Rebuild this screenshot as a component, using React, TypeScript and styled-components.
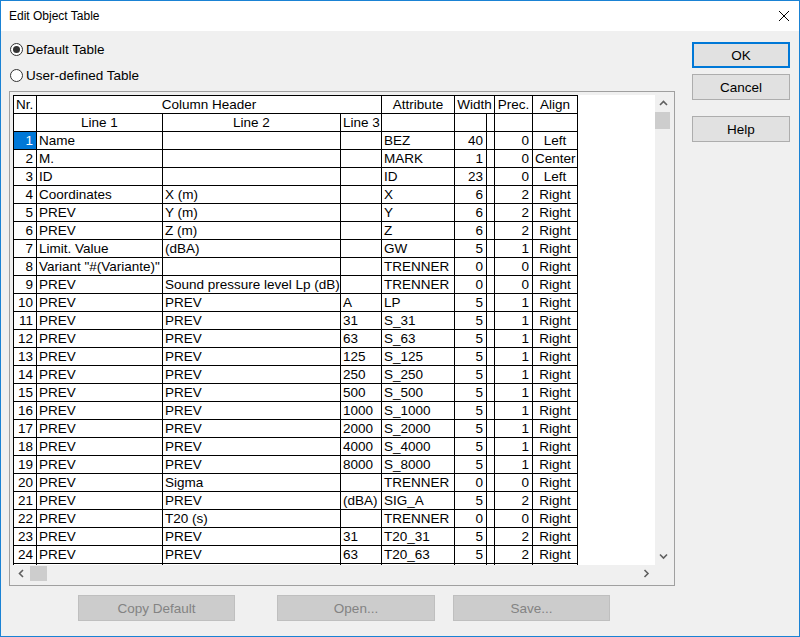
import React from "react";
import styled, { createGlobalStyle } from "styled-components";

type Align = "left" | "right" | "center";

const GlobalStyle = createGlobalStyle`
  html, body {
    margin: 0;
    padding: 0;
    background: #f0f0f0;
  }
  body {
    font-family: "Liberation Sans", Arial, sans-serif;
  }
`;

const COLUMNS = [23, 126, 178, 41, 73, 32, 8, 38, 45];

// nr, line 1, line 2, line 3, attribute, width, prec, align
const ROWS: [number, string, string, string, string, number, number, string][] = [
  [1, "Name", "", "", "BEZ", 40, 0, "Left"],
  [2, "M.", "", "", "MARK", 1, 0, "Center"],
  [3, "ID", "", "", "ID", 23, 0, "Left"],
  [4, "Coordinates", "X (m)", "", "X", 6, 2, "Right"],
  [5, "PREV", "Y (m)", "", "Y", 6, 2, "Right"],
  [6, "PREV", "Z (m)", "", "Z", 6, 2, "Right"],
  [7, "Limit. Value", "(dBA)", "", "GW", 5, 1, "Right"],
  [8, 'Variant "#(Variante)"', "", "", "TRENNER", 0, 0, "Right"],
  [9, "PREV", "Sound pressure level Lp (dB)", "", "TRENNER", 0, 0, "Right"],
  [10, "PREV", "PREV", "A", "LP", 5, 1, "Right"],
  [11, "PREV", "PREV", "31", "S_31", 5, 1, "Right"],
  [12, "PREV", "PREV", "63", "S_63", 5, 1, "Right"],
  [13, "PREV", "PREV", "125", "S_125", 5, 1, "Right"],
  [14, "PREV", "PREV", "250", "S_250", 5, 1, "Right"],
  [15, "PREV", "PREV", "500", "S_500", 5, 1, "Right"],
  [16, "PREV", "PREV", "1000", "S_1000", 5, 1, "Right"],
  [17, "PREV", "PREV", "2000", "S_2000", 5, 1, "Right"],
  [18, "PREV", "PREV", "4000", "S_4000", 5, 1, "Right"],
  [19, "PREV", "PREV", "8000", "S_8000", 5, 1, "Right"],
  [20, "PREV", "Sigma", "", "TRENNER", 0, 0, "Right"],
  [21, "PREV", "PREV", "(dBA)", "SIG_A", 5, 2, "Right"],
  [22, "PREV", "T20 (s)", "", "TRENNER", 0, 0, "Right"],
  [23, "PREV", "PREV", "31", "T20_31", 5, 2, "Right"],
  [24, "PREV", "PREV", "63", "T20_63", 5, 2, "Right"],
];

const Window = styled.div`
  width: 800px;
  height: 637px;
  box-sizing: border-box;
  border: 1px solid #1a82d4;
  background: #f0f0f0;
  display: flex;
  flex-direction: column;
  overflow: hidden;
`;

const TitleBar = styled.div`
  height: 30px;
  flex-shrink: 0;
  background: #fff;
  display: flex;
  align-items: center;
  justify-content: space-between;
  padding: 0 9px 0 8px;
  font-size: 12px;
  color: #000;
`;

const CloseButton = styled.div`
  width: 12px;
  height: 12px;
  display: flex;
  margin-top: -1px;
`;

const Body = styled.div`
  flex: 1;
  display: flex;
  flex-direction: column;
  padding: 5px 0 0 8px;
`;

const TopRow = styled.div`
  display: flex;
  gap: 17px;
`;

const LeftColumn = styled.div`
  width: 666px;
  display: flex;
  flex-direction: column;
`;

const RightColumn = styled.div`
  width: 98px;
  display: flex;
  flex-direction: column;
  padding-top: 6px;
`;

const RadioRow = styled.label`
  height: 26px;
  display: flex;
  align-items: center;
  gap: 3px;
  padding-left: 1px;
  font-size: 13.5px;
  color: #000;
`;

const RadioCircle = styled.span<{ $checked?: boolean }>`
  width: 13px;
  height: 13px;
  box-sizing: border-box;
  border: 1px solid #333;
  border-radius: 50%;
  background: #fff;
  display: flex;
  align-items: center;
  justify-content: center;
  &::after {
    content: "";
    width: 7px;
    height: 7px;
    border-radius: 50%;
    background: ${(p) => (p.$checked ? "#333" : "transparent")};
  }
`;

const Frame = styled.div`
  margin-top: 3px;
  height: 495px;
  box-sizing: border-box;
  border: 1px solid #a0a0a0;
  padding: 3px 2px 3px 3px;
  display: grid;
  grid-template-columns: 642px 17px;
  grid-template-rows: 470px 17px;
`;

const GridArea = styled.div`
  background: #fff;
  overflow: hidden;
`;

const Table = styled.div`
  display: grid;
  grid-template-columns: ${COLUMNS.map((c) => `${c}px`).join(" ")};
  width: max-content;
  border-left: 1px solid #000;
  border-top: 1px solid #000;
  font-size: 13.5px;
  color: #000;
`;

const Cell = styled.div<{ $align?: Align; $span?: number; $selected?: boolean }>`
  grid-column: span ${(p) => p.$span ?? 1};
  height: 18px;
  box-sizing: border-box;
  border-right: 1px solid #000;
  border-bottom: 1px solid #000;
  padding: ${(p) => (p.$align === "right" ? "0 3px 0 2px" : "0 2px")};
  line-height: 17px;
  text-align: ${(p) => p.$align ?? "left"};
  white-space: nowrap;
  overflow: hidden;
  background: ${(p) => (p.$selected ? "#0078d7" : "transparent")};
  color: ${(p) => (p.$selected ? "#fff" : "#000")};
`;

const VScroll = styled.div`
  display: flex;
  flex-direction: column;
  background: #f0f0f0;
`;

const HScroll = styled.div`
  display: flex;
  background: #f0f0f0;
`;

const ArrowBox = styled.div`
  width: 17px;
  height: 17px;
  flex-shrink: 0;
  display: flex;
  align-items: center;
  justify-content: center;
`;

const Track = styled.div<{ $vertical?: boolean }>`
  flex: 1;
  display: flex;
  flex-direction: ${(p) => (p.$vertical ? "column" : "row")};
`;

const Thumb = styled.div<{ $vertical?: boolean }>`
  background: #cdcdcd;
  width: ${(p) => (p.$vertical ? "15px" : "17px")};
  height: ${(p) => (p.$vertical ? "17px" : "15px")};
  margin: ${(p) => (p.$vertical ? "0 1px 0 0" : "1px 0 0 0")};
`;

const Spacer = styled.div`
  flex: 1;
`;

const Button = styled.div<{ $primary?: boolean; $disabled?: boolean; $offset?: number; $gap?: number }>`
  height: 26px;
  box-sizing: border-box;
  display: flex;
  align-items: center;
  justify-content: center;
  font-size: 13.5px;
  background: ${(p) => (p.$disabled ? "#cccccc" : "#e1e1e1")};
  border: ${(p) =>
    p.$primary ? "2px solid #0078d7" : p.$disabled ? "1px solid #bfbfbf" : "1px solid #adadad"};
  color: ${(p) => (p.$disabled ? "#838383" : "#000")};
  margin-top: ${(p) => p.$gap ?? 0}px;
  margin-left: ${(p) => p.$offset ?? 0}px;
`;

const BottomRow = styled.div`
  display: flex;
  margin-top: 9px;
`;

const WideButton = styled(Button)<{ $width: number }>`
  width: ${(p) => p.$width}px;
`;

const Chevron: React.FC<{ dir: "up" | "down" | "left" | "right" }> = ({ dir }) => {
  const points = {
    up: "1,5 4.5,1.5 8,5",
    down: "1,1.5 4.5,5 8,1.5",
    left: "5,1 1.5,4.5 5,8",
    right: "1.5,1 5,4.5 1.5,8",
  }[dir];
  const vertical = dir === "up" || dir === "down";
  return (
    <svg width={vertical ? 9 : 7} height={vertical ? 7 : 9} viewBox={vertical ? "0 0 9 7" : "0 0 7 9"}>
      <polyline points={points} fill="none" stroke="#606060" strokeWidth="1.6" />
    </svg>
  );
};

const alignOf = (col: number): Align => {
  if (col === 0 || col === 5 || col === 7) return "right";
  if (col === 8) return "center";
  return "left";
};

const App: React.FC = () => {
  return (
    <>
      <GlobalStyle />
      <Window>
        <TitleBar>
          <span>Edit Object Table</span>
          <CloseButton>
            <svg width="12" height="12" viewBox="0 0 12 12">
              <path d="M1 1 L11 11 M11 1 L1 11" stroke="#000" strokeWidth="1" />
            </svg>
          </CloseButton>
        </TitleBar>
        <Body>
          <TopRow>
            <LeftColumn>
              <RadioRow>
                <RadioCircle $checked />
                Default Table
              </RadioRow>
              <RadioRow>
                <RadioCircle />
                User-defined Table
              </RadioRow>
              <Frame>
                <GridArea>
                  <Table>
                    <Cell>Nr.</Cell>
                    <Cell $span={3} $align="center">Column Header</Cell>
                    <Cell $align="center">Attribute</Cell>
                    <Cell $span={2} $align="center">Width</Cell>
                    <Cell $align="center">Prec.</Cell>
                    <Cell $align="center">Align</Cell>

                    <Cell />
                    <Cell $align="center">Line 1</Cell>
                    <Cell $align="center">Line 2</Cell>
                    <Cell>Line 3</Cell>
                    <Cell />
                    <Cell />
                    <Cell />
                    <Cell />
                    <Cell />

                    {ROWS.map(([nr, l1, l2, l3, attr, width, prec, align]) => {
                      const values = [String(nr), l1, l2, l3, attr, String(width), "", String(prec), align];
                      return values.map((v, i) => (
                        <Cell key={`${nr}-${i}`} $align={alignOf(i)} $selected={nr === 1 && i === 0}>
                          {v}
                        </Cell>
                      ));
                    })}
                    {/* next row, scrolled below the visible area */}
                    {COLUMNS.map((_, i) => (
                      <Cell key={`next-${i}`} />
                    ))}
                  </Table>
                </GridArea>
                <VScroll>
                  <ArrowBox>
                    <Chevron dir="up" />
                  </ArrowBox>
                  <Track $vertical>
                    <Thumb $vertical />
                  </Track>
                  <ArrowBox>
                    <Chevron dir="down" />
                  </ArrowBox>
                </VScroll>
                <HScroll>
                  <ArrowBox>
                    <Chevron dir="left" />
                  </ArrowBox>
                  <Track>
                    <Thumb />
                  </Track>
                  <ArrowBox>
                    <Chevron dir="right" />
                  </ArrowBox>
                </HScroll>
                <Spacer />
              </Frame>
            </LeftColumn>
            <RightColumn>
              <Button $primary>OK</Button>
              <Button $gap={6}>Cancel</Button>
              <Button $gap={16}>Help</Button>
            </RightColumn>
          </TopRow>
          <BottomRow>
            <WideButton $disabled $width={157} $offset={69}>Copy Default</WideButton>
            <WideButton $disabled $width={158} $offset={42}>Open...</WideButton>
            <WideButton $disabled $width={157} $offset={18}>Save...</WideButton>
          </BottomRow>
        </Body>
      </Window>
    </>
  );
};

export default App;
